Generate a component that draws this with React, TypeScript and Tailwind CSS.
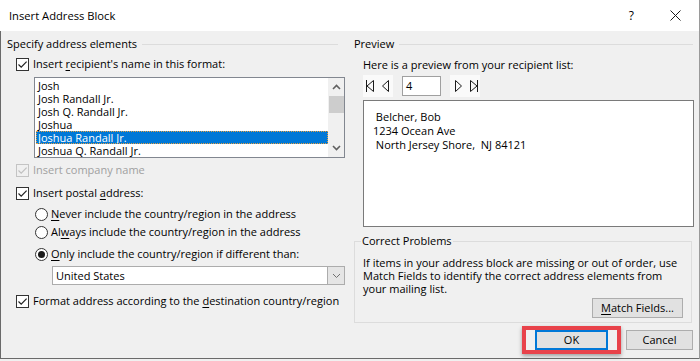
import React from 'react';

const listItems = ['Josh', 'Josh Randall Jr.', 'Josh Q. Randall Jr.', 'Joshua', 'Joshua Randall Jr.', 'Joshua Q. Randall Jr.'];

function Check({ disabled = false }: { disabled?: boolean }) {
  return (
    <span
      className={`w-[13px] h-[13px] border flex items-center justify-center shrink-0 ${
        disabled ? 'border-[#c4c4c4] bg-[#f0f0f0]' : 'border-[#333333] bg-white'
      }`}
    >
      <svg width="11" height="11" viewBox="0 0 11 11">
        <path d="M1.5 5.5 L4.2 8.2 L9.6 2.6" fill="none" stroke={disabled ? '#c0c0c0' : '#222'} strokeWidth="1.2" />
      </svg>
    </span>
  );
}

function Radio({ on = false }: { on?: boolean }) {
  return (
    <span className="w-[13px] h-[13px] rounded-full border border-[#333333] bg-white flex items-center justify-center shrink-0">
      {on && <span className="w-[7px] h-[7px] rounded-full bg-[#1a1a1a]" />}
    </span>
  );
}

function Chevron({ up = false, color = '#606060', w = 1.6 }: { up?: boolean; color?: string; w?: number }) {
  return (
    <svg width="9" height="6" viewBox="0 0 9 6">
      <path d={up ? 'M1 5 L4.5 1.5 L8 5' : 'M1 1 L4.5 4.5 L8 1'} fill="none" stroke={color} strokeWidth={w} />
    </svg>
  );
}

function NavIcon({ kind }: { kind: 'first' | 'prev' | 'next' | 'last' }) {
  const paths: Record<string, string> = {
    first: 'M2.5 1 V13 M9.5 1.5 L3 7 L9.5 12.5 Z',
    prev: 'M9.5 1.5 L3.5 7 L9.5 12.5 Z',
    next: 'M4.5 1.5 L10.5 7 L4.5 12.5 Z',
    last: 'M11.5 1 V13 M4.5 1.5 L11 7 L4.5 12.5 Z',
  };
  return (
    <span className="w-[15px] h-[22px] bg-[#fafafa] flex items-center justify-center">
      <svg width="14" height="14" viewBox="0 0 14 14">
        <path d={paths[kind]} fill="none" stroke="#1a1a1a" strokeWidth="1" />
      </svg>
    </span>
  );
}

export default function App() {
  return (
    <div className="w-[700px] h-[361px] bg-[#f0f0f0] font-['Open_Sans',sans-serif] text-[11px] text-black leading-[14px]">
      <div className="h-[359px] flex flex-col border-r border-[#9a9a9a]">
        {/* title bar */}
        <div className="h-[31px] bg-white flex items-center shrink-0">
          <span className="ml-[9px] text-[11.2px] mt-[1px]">Insert Address Block</span>
          <span className="ml-auto mr-[36px] text-[12px]">?</span>
          <svg className="mr-[18px]" width="11" height="11" viewBox="0 0 11 11">
            <path d="M0.5 0.5 L10.5 10.5 M10.5 0.5 L0.5 10.5" stroke="#1a1a1a" strokeWidth="1" />
          </svg>
        </div>

        {/* body */}
        <div className="flex-1 flex border-l border-b border-[#6a6a6a]">
          {/* left column */}
          <div className="w-[346px] flex flex-col">
            <div className="mt-[6px] h-[14px] flex items-center pl-[6px] mr-[9px]">
              <span>Specify address elements</span>
              <span className="flex-1 ml-[5px] h-px bg-[#dcdcdc]" />
            </div>

            <div className="mt-[6px] h-[14px] flex items-center pl-[15px] gap-[4px]">
              <Check />
              <span>
                Insert <u className="underline-offset-2">r</u>ecipient's name in this format:
              </span>
            </div>

            <div className="mt-[6px] ml-[33px] w-[311px] h-[81px] border border-[#828790] bg-white flex">
              <div className="flex-1 pt-[1px] overflow-hidden">
                {listItems.map((item) => {
                  const sel = item === 'Joshua Randall Jr.';
                  return (
                    <div
                      key={item}
                      className={`h-[13px] ml-px flex items-center pl-[2px] leading-[12px] overflow-hidden ${
                        sel ? 'bg-[#0078d7] text-white border border-dotted border-[#e8a040] pl-px' : ''
                      }`}
                    >
                      {item}
                    </div>
                  );
                })}
              </div>
              <div className="w-[16px] bg-[#f0f0f0] flex flex-col items-center">
                <div className="h-[18px] flex items-center justify-center">
                  <Chevron up />
                </div>
                <div className="w-[15px] h-[17px] bg-[#cdcdcd]" />
                <div className="mt-auto h-[18px] flex items-center justify-center">
                  <Chevron />
                </div>
              </div>
            </div>

            <div className="mt-[5px] h-[14px] flex items-center pl-[15px] gap-[4px] text-[#a0a0a0]">
              <Check disabled />
              <span>Insert company name</span>
            </div>

            <div className="mt-[9px] h-[14px] flex items-center pl-[15px] gap-[4px]">
              <Check />
              <span>
                Insert postal <u className="underline-offset-2">a</u>ddress:
              </span>
            </div>

            <div className="mt-[7px] h-[14px] flex items-center pl-[34px] gap-[3px]">
              <Radio />
              <span>
                <u className="underline-offset-2">N</u>ever include the country/region in the address
              </span>
            </div>

            <div className="mt-[4px] h-[14px] flex items-center pl-[34px] gap-[3px]">
              <Radio />
              <span>
                Al<u className="underline-offset-2">w</u>ays include the country/region in the address
              </span>
            </div>

            <div className="mt-[8px] h-[14px] flex items-center pl-[34px] gap-[3px]">
              <Radio on />
              <span>
                <u className="underline-offset-2">O</u>nly include the country/region if different than:
              </span>
            </div>

            <div className="mt-[5px] ml-[51px] w-[293px] h-[19px] border border-[#acacac] bg-white flex">
              <span className="flex-1 pl-[3px] flex items-center">United States</span>
              <span className="w-[17px] bg-[#e5e5e5] border-l border-[#acacac] flex items-center justify-center">
                <Chevron color="#707070" w={1} />
              </span>
            </div>

            <div className="mt-[9px] h-[14px] flex items-center pl-[15px] gap-[4px]">
              <Check />
              <span>
                Format address according to the <u className="underline-offset-2">d</u>estination country/region
              </span>
            </div>
          </div>

          {/* right column */}
          <div className="ml-[7px] w-[339px] flex flex-col">
            <div className="mt-[6px] h-[14px] flex items-center">
              <span>Preview</span>
              <span className="flex-1 ml-[5px] h-px bg-[#dcdcdc]" />
            </div>

            <div className="mt-[7px] h-[14px] flex items-center pl-[9px]">Here is a preview from your recipient list:</div>

            <div className="mt-[3px] h-[22px] flex items-center pl-[9px]">
              <NavIcon kind="first" />
              <NavIcon kind="prev" />
              <span className="ml-[9px] w-[39px] h-[20px] border border-[#a0a0a0] bg-white flex items-center pl-[3px]">4</span>
              <span className="ml-[9px] flex">
                <NavIcon kind="next" />
                <NavIcon kind="last" />
              </span>
            </div>

            <div className="mt-[3px] ml-[9px] w-[331px] h-[127px] border border-[#7a7a7a] bg-white pt-[9px] pl-[9px] whitespace-pre">
              <div> Belcher, Bob</div>
              <div>1234 Ocean Ave</div>
              <div> North Jersey Shore,  NJ 84121</div>
            </div>

            {/* Correct Problems group */}
            <div className="mt-[7px] w-[338px] flex flex-col">
              <div className="h-[14px] flex items-end">
                <span className="w-[7px] h-[7px] border-l border-t border-[#dcdcdc]" />
                <span className="self-center px-px">Correct Problems</span>
                <span className="flex-1 h-[7px] border-r border-t border-[#dcdcdc]" />
              </div>
              <div className="h-[75px] border-l border-r border-b border-[#dcdcdc] pt-[8px] pl-[8px] pr-[8px] flex flex-col">
                <div className="leading-[13px]">
                  If items in your address block are missing or out of order, use
                  <br />
                  Match Fields to identify the correct address elements from
                  <br />
                  your mailing list.
                </div>
                <button className="mt-[3px] self-end w-[91px] h-[20px] bg-[#e1e1e1] border border-[#adadad] flex items-center justify-center">
                  <span>
                    <u className="underline-offset-2">M</u>atch Fields...
                  </span>
                </button>
              </div>
            </div>

            <div className="mt-[7px] flex justify-end gap-[18px]">
              <div className="relative">
                <button className="w-[73px] h-[20px] bg-[#e1e1e1] border-2 border-[#0078d7] flex items-center justify-center">
                  OK
                </button>
                <span className="absolute -left-[13px] -right-[13px] -top-[4px] -bottom-[4px] border-4 border-[#e8424a] shadow-[0_2px_4px_rgba(0,0,0,0.35)] pointer-events-none" />
              </div>
              <button className="w-[67px] h-[20px] bg-[#e1e1e1] border border-[#adadad] flex items-center justify-center">
                Cancel
              </button>
            </div>
          </div>
        </div>
      </div>
    </div>
  );
}
